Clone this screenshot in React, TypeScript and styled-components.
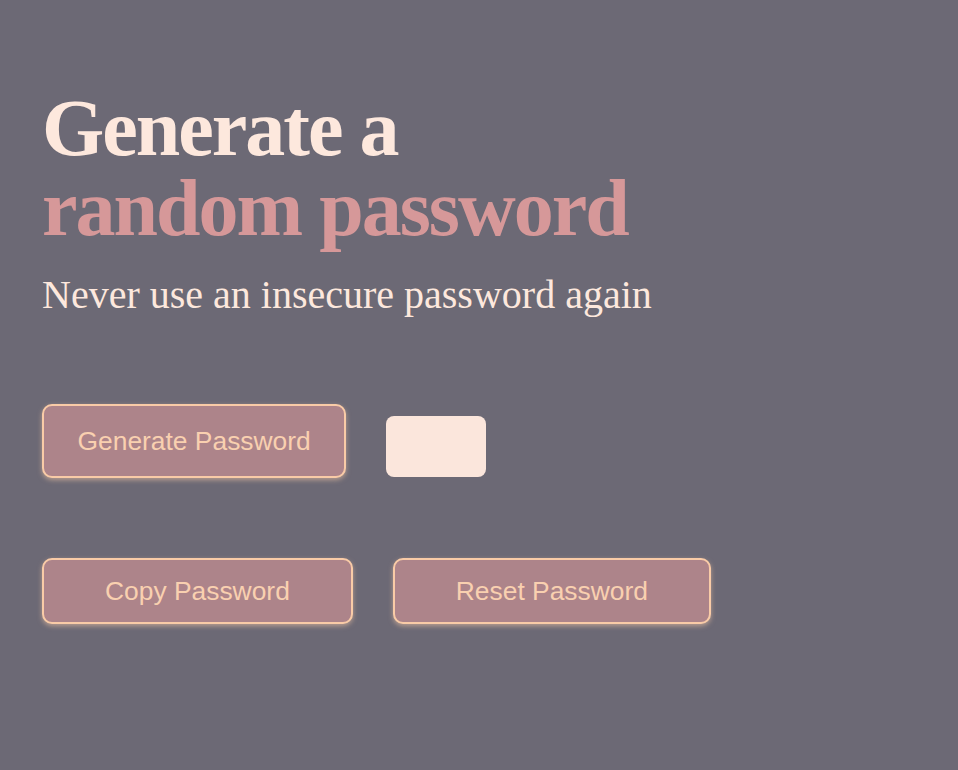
import styled, { createGlobalStyle } from "styled-components";

const GlobalStyle = createGlobalStyle`
  html, body {
    margin: 0;
    background: #6c6975;
  }
  body {
    font-family: "Liberation Serif", "Times New Roman", serif;
  }
`;

const Page = styled.main`
  min-height: 770px;
  box-sizing: border-box;
  padding: 88px 42px 0;
  display: flex;
  flex-direction: column;
  align-items: flex-start;
`;

const Title = styled.h1`
  margin: 0;
  font-family: "Liberation Serif", "Times New Roman", serif;
  font-weight: 700;
  font-size: 80px;
  line-height: 80px;
  letter-spacing: -2px;
  color: #fde8dd;
`;

const Accent = styled.span`
  display: block;
  color: #d69899;
`;

const Subtitle = styled.p`
  margin: 24px 0 0;
  font-size: 40px;
  line-height: 46px;
  color: #fde8dd;
`;

const Row = styled.div<{ $top: number }>`
  display: flex;
  align-items: flex-end;
  gap: 40px;
  margin-top: ${(p) => p.$top}px;
`;

const Button = styled.button<{ $padY: number; $padX: number }>`
  font-family: "Liberation Sans", Arial, Helvetica, sans-serif;
  font-size: 26.4px;
  line-height: 30px;
  color: #f9d0b0;
  background: #ad848a;
  border: 2px solid #f9cba7;
  border-radius: 10px;
  padding: ${(p) => p.$padY}px ${(p) => p.$padX}px;
  box-shadow: 0 2px 5px rgba(249, 203, 167, 0.55);
  cursor: pointer;
`;

const PasswordBox = styled.div`
  width: 100px;
  height: 61px;
  border-radius: 8px;
  background: #fbe6dc;
  margin-bottom: 1px;
`;

export default function App() {
  return (
    <>
      <GlobalStyle />
      <Page>
        <Title>
          Generate a
          <Accent>random password</Accent>
        </Title>
        <Subtitle>Never use an insecure password again</Subtitle>
        <Row $top={86}>
          <Button $padY={20} $padX={33.5}>Generate Password</Button>
          <PasswordBox />
        </Row>
        <Row $top={80}>
          <Button $padY={16} $padX={61}>Copy Password</Button>
          <Button $padY={16} $padX={61}>Reset Password</Button>
        </Row>
      </Page>
    </>
  );
}
